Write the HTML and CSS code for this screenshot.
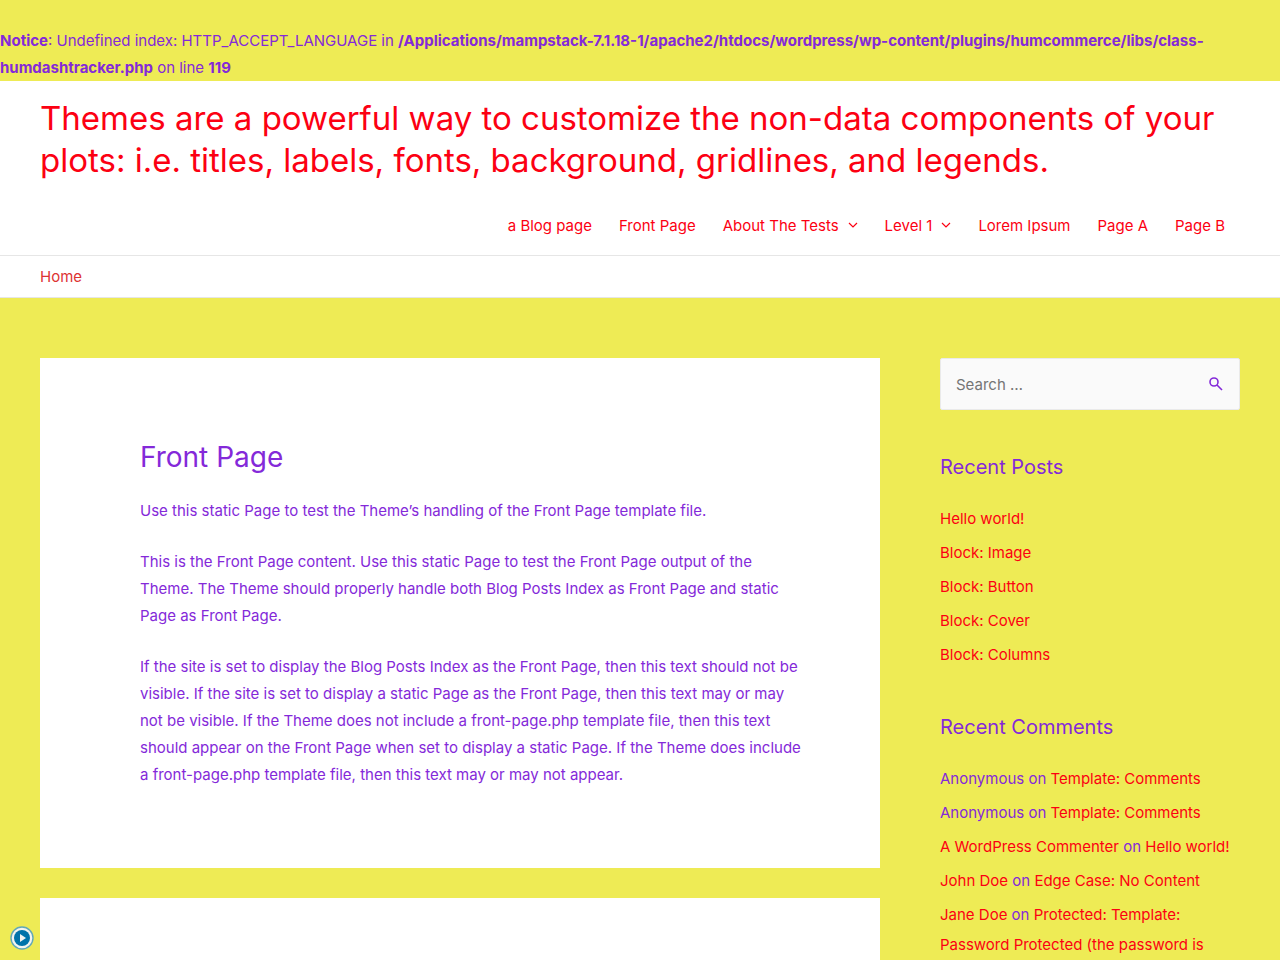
FILE: index.html
```html
<!DOCTYPE html>
<html lang="en">
<head>
<meta charset="utf-8">
<meta name="viewport" content="width=device-width, initial-scale=1">
<title>Front Page</title>
<link rel="stylesheet" href="styles.css">
</head>
<body>
<div class="notice"><b>Notice</b>: Undefined index: HTTP_ACCEPT_LANGUAGE in <b>/Applications/mampstack-7.1.18-1/apache2/htdocs/wordpress/wp-content/plugins/humcommerce/libs/class-humdashtracker.php</b> on line <b>119</b></div>
<header class="site-header">
  <p class="site-title"><a href="#">Themes are a powerful way to customize the non-data components of your plots: i.e. titles, labels, fonts, background, gridlines, and legends.</a></p>
  <nav class="menu" aria-label="Primary">
    <a href="#">a Blog page</a>
    <a href="#">Front Page</a>
    <a href="#">About The Tests <svg class="chevron" viewBox="0 0 10 8" aria-hidden="true"><path d="M1 1l4 4 4-4"/></svg></a>
    <a href="#">Level 1 <svg class="chevron" viewBox="0 0 10 8" aria-hidden="true"><path d="M1 1l4 4 4-4"/></svg></a>
    <a href="#">Lorem Ipsum</a>
    <a href="#">Page A</a>
    <a href="#">Page B</a>
  </nav>
</header>
<nav class="breadcrumb" aria-label="Breadcrumb"><a href="#">Home</a></nav>
<div class="layout">
  <main class="content">
    <article class="card">
      <h1>Front Page</h1>
      <p>Use this static Page to test the Theme’s handling of the Front Page template file.</p>
      <p>This is the Front Page content. Use this static Page to test the Front Page output of the Theme. The Theme should properly handle both Blog Posts Index as Front Page and static Page as Front Page.</p>
      <p>If the site is set to display the Blog Posts Index as the Front Page, then this text should not be visible. If the site is set to display a static Page as the Front Page, then this text may or may not be visible. If the Theme does not include a front-page.php template file, then this text should appear on the Front Page when set to display a static Page. If the Theme does include a front-page.php template file, then this text may or may not appear.</p>
    </article>
    <section class="card"></section>
  </main>
  <aside class="sidebar">
    <form class="search" role="search">
      <input type="search" placeholder="Search …" aria-label="Search for:">
      <button type="submit" aria-label="Search"><svg viewBox="0 0 14 14" aria-hidden="true"><circle cx="5" cy="5" r="4"/><path d="M8 8l5 5"/></svg></button>
    </form>
    <section class="widget">
      <h2>Recent Posts</h2>
      <ul>
        <li><a href="#">Hello world!</a></li>
        <li><a href="#">Block: Image</a></li>
        <li><a href="#">Block: Button</a></li>
        <li><a href="#">Block: Cover</a></li>
        <li><a href="#">Block: Columns</a></li>
      </ul>
    </section>
    <section class="widget">
      <h2>Recent Comments</h2>
      <ul>
        <li>Anonymous on <a href="#">Template: Comments</a></li>
        <li>Anonymous on <a href="#">Template: Comments</a></li>
        <li><a href="#">A WordPress Commenter</a> on <a href="#">Hello world!</a></li>
        <li><a href="#">John Doe</a> on <a href="#">Edge Case: No Content</a></li>
        <li><a href="#">Jane Doe</a> on <a href="#">Protected: Template: Password Protected (the password is</a></li>
      </ul>
    </section>
  </aside>
</div>
<button class="play" type="button" aria-label="Play"><svg viewBox="0 0 24 24" aria-hidden="true"><circle cx="12" cy="12" r="11" fill="#f4f4f0" stroke="#62a8b8" stroke-width="1.4"/><circle cx="12" cy="12" r="8" fill="#0073aa"/><path d="M10 8l6 4-6 4z" fill="#f4f4f0"/></svg></button>
</body>
</html>
```
FILE: styles.css
```css
* { box-sizing: border-box; }
body {
  margin: 0;
  background: #eeeb55;
  color: #8429d9;
  font: 15px/27px Inter, "Liberation Sans", sans-serif;
}
h1, h2, p, ul { margin: 0; padding: 0; font-weight: 400; }
ul { list-style: none; }
a { color: #fc0012; text-decoration: none; }
.notice { padding-top: 27px; }
.notice b { font-weight: 700; }
.site-header {
  padding: 16px 40px 0;
  background: #fff;
  border-bottom: 1px solid #e6e6e6;
}
.site-title { font-size: 33px; line-height: 42px; }
.menu {
  display: flex;
  justify-content: flex-end;
  gap: 27px;
  padding: 16px 15px 0 0;
  line-height: 58px;
}
.menu a { display: flex; align-items: center; gap: 9px; }
.chevron { width: 10px; height: 8px; fill: none; stroke: currentColor; stroke-width: 1.2; }
.breadcrumb {
  padding: 7px 40px;
  background: #fff;
  border-bottom: 1px solid #e6e6e6;
}
.breadcrumb a { color: #dd3333; }
.layout {
  display: grid;
  grid-template-columns: minmax(0, 1fr) 300px;
  gap: 60px;
  max-width: 1280px;
  margin: 0 auto;
  padding: 60px 40px;
}
.content { display: grid; gap: 30px; align-content: start; }
.card { min-height: 300px; padding: 80px 75px 80px 100px; background: #fff; }
.card h1 { margin-bottom: 20px; font-size: 28px; line-height: 39px; }
.card p + p { margin-top: 24px; }
.search {
  display: flex;
  height: 52px;
  background: #fafafa;
  border: 1px solid #eaeaea;
  border-radius: 2px;
}
.search input {
  flex: 1;
  min-width: 0;
  padding: 0 15px;
  border: 0;
  background: none;
  color: #666;
  font: inherit;
}
.search input::placeholder { color: #757575; opacity: 1; }
.search button {
  display: grid;
  place-items: center;
  width: 46px;
  padding: 0;
  border: 0;
  background: none;
  color: #8429d9;
}
.search svg { width: 14px; height: 14px; fill: none; stroke: currentColor; stroke-width: 1.6; }
.widget { margin-top: 45px; }
.widget h2 { margin-bottom: 25px; font-size: 20px; line-height: 24px; }
.widget ul { display: grid; gap: 4px; line-height: 30px; }
.play {
  position: fixed;
  left: 10px;
  bottom: 10px;
  width: 24px;
  height: 24px;
  padding: 0;
  border: 0;
  background: none;
}
.play svg { display: block; }
```
